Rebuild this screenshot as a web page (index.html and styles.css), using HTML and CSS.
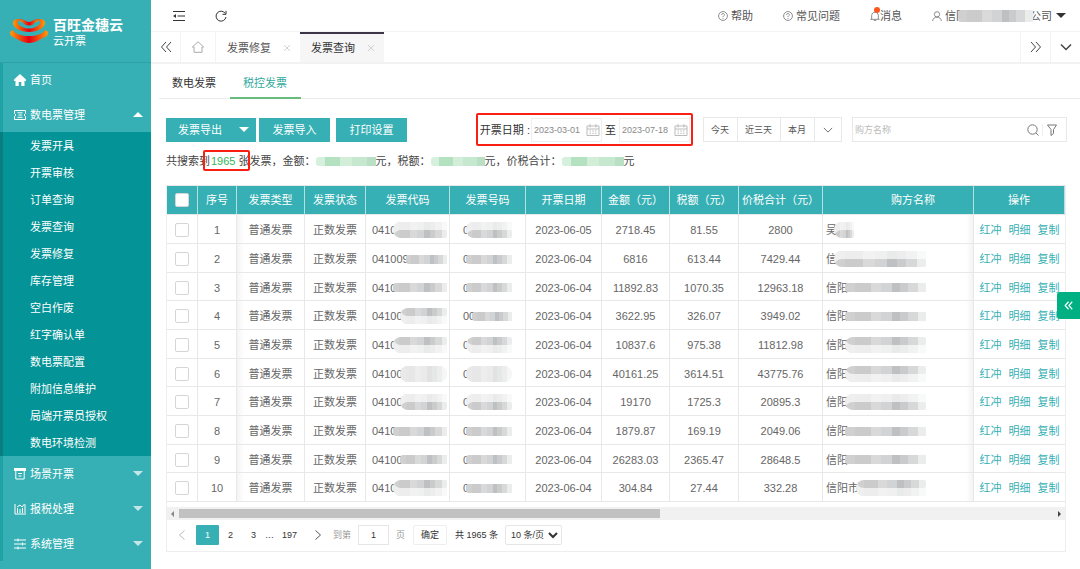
FILE: index.html
```html
<!DOCTYPE html>
<html lang="zh-CN">
<head>
<meta charset="utf-8">
<title>云开票 - 发票查询</title>
<link rel="stylesheet" href="styles.css">
</head>
<body>
<svg class="sprite" aria-hidden="true">
  <symbol id="i-dleft" viewBox="0 0 12 12"><path d="M6 1 1.500 6 6 11M11 1 6.500 6 11 11"/></symbol>
  <symbol id="i-dright" viewBox="0 0 12 12"><path d="M1 1 5.500 6 1 11M6 1 10.500 6 6 11"/></symbol>
  <symbol id="i-down" viewBox="0 0 12 12"><path d="M1 3.500 6 8.500 11 3.500"/></symbol>
  <symbol id="i-left" viewBox="0 0 12 12"><path d="M8.500 1.500 3.500 6 8.500 10.500"/></symbol>
  <symbol id="i-right" viewBox="0 0 12 12"><path d="M3.500 1.500 8.500 6 3.500 10.500"/></symbol>
  <symbol id="i-close" viewBox="0 0 12 12"><path d="M1.500 1.500 10.500 10.500M10.500 1.500 1.500 10.500"/></symbol>
  <symbol id="i-help" viewBox="0 0 12 12"><circle cx="6" cy="6" r="5.300"/><path d="M4.300 4.800C4.300 2.400 7.700 2.500 7.700 4.600 7.700 5.800 6 5.800 6 7.300M6 8.400V9.400"/></symbol>
  <symbol id="i-cal" viewBox="0 0 14 14"><path d="M1 3H13V12.500H1ZM1 6H13M4 1V4.500M10 1V4.500M3.500 8H5M6.300 8H7.800M9 8H10.500M3.500 10.300H5M6.300 10.300H7.800M9 10.300H10.500"/></symbol>
</svg>
<div class="app">
  <aside class="sidebar">
    <div class="brand">
      <svg class="brand-logo" viewBox="0 0 38 24" aria-hidden="true">
        <defs>
          <linearGradient id="bowl"><stop offset="0" stop-color="#ff9c0a"/><stop offset=".28" stop-color="#f0430e"/><stop offset=".5" stop-color="#e60012"/><stop offset=".72" stop-color="#f0430e"/><stop offset="1" stop-color="#ff9c0a"/></linearGradient>
        </defs>
        <path fill="url(#bowl)" d="M3 4C3-.500 9-.500 14 1 9 .800 7 2 8 4.500 10 8 15 9.500 19 9.500S28 8 30 4.500C31 2 29 .800 24 1 29-.500 35-.500 35 4 35 9 27 13 19 13S3 9 3 4Z"/>
        <path fill="url(#bowl)" d="M9 2.500C11 .500 14 .800 16 2 18 3.200 20 3.200 22 2 24 .800 27 .500 29 2.500 26 2.300 25 3.500 23.500 5 21 7 17 7 14.500 5 13 3.500 12 2.300 9 2.500Z"/>
        <path fill="url(#bowl)" d="M3 11C-1 12-1 16 3 18 8 20 12 24 19 24S30 20 35 18C39 16 39 12 35 11 33 15 26 17 19 17S5 15 3 11Z"/>
      </svg>
      <div class="brand-text"><strong>百旺金穗云</strong><span>云开票</span></div>
    </div>
    <nav class="menu">
      <a class="menu-item" href="#"><svg viewBox="0 0 12 12" aria-hidden="true"><path class="solid" d="M6 0 12 5.500V7H10.500V12H7.300V8H4.700V12H1.500V7H0V5.500Z"/></svg>首页</a>
      <a class="menu-item open" href="#"><svg viewBox="0 0 12 12" aria-hidden="true"><path d="M.500 1.500H11.500V4.500L10 6 11.500 7.500V10.500H.500V7.500L2 6 .500 4.500ZM3.500 3.800H8.500M4.500 6H8M3.500 8.300H8.500"/></svg>数电票管理<i class="caret up"></i></a>
      <div class="submenu">
        <a href="#">发票开具</a>
        <a href="#">开票审核</a>
        <a href="#">订单查询</a>
        <a href="#">发票查询</a>
        <a href="#">发票修复</a>
        <a href="#">库存管理</a>
        <a href="#">空白作废</a>
        <a href="#">红字确认单</a>
        <a href="#">数电票配置</a>
        <a href="#">附加信息维护</a>
        <a href="#">局端开票员授权</a>
        <a href="#">数电环境检测</a>
      </div>
      <a class="menu-item" href="#"><svg viewBox="0 0 12 12" aria-hidden="true"><path class="solid" d="M0 0H12V3H0Z"/><path d="M1.800 3V11H10.200V3M4 5.500H8M4.500 8H7.500"/></svg>场景开票<i class="caret"></i></a>
      <a class="menu-item" href="#"><svg viewBox="0 0 12 12" aria-hidden="true"><path d="M1 1V11H12M3.500 10V5M6 10V6M8.500 10V5M11 10V1.500M3 4 6 2 8 4 10.500 1"/></svg>报税处理<i class="caret"></i></a>
      <a class="menu-item" href="#"><svg viewBox="0 0 12 12" aria-hidden="true"><path d="M0 2H12M0 6H12M0 10H12M4 .500V3.500M8.500 4.500V7.500M4 8.500V11.500"/></svg>系统管理<i class="caret"></i></a>
    </nav>
  </aside>

  <main class="main">
    <header class="topbar">
      <button class="icon-btn" aria-label="收起菜单"><svg viewBox="0 0 12 12"><path d="M0 1.500H12M4.500 6H12M0 10.500H12"/><path class="solid" d="M0 6 3 4V8Z"/></svg></button>
      <button class="icon-btn" aria-label="刷新"><svg viewBox="0 0 12 12"><path d="M10.300 3.500A5 5 0 1 0 11 7M11 .800V4.300H7.500"/></svg></button>
      <div class="top-links">
        <a href="#"><svg viewBox="0 0 12 12"><use href="#i-help"/></svg>帮助</a>
        <a href="#"><svg viewBox="0 0 12 12"><use href="#i-help"/></svg>常见问题</a>
        <a class="notice" href="#"><svg viewBox="0 0 12 12"><path d="M.500 10H11.500M2 10V5.500C2 0 10 0 10 5.500V10M4.500 11.500H7.500"/></svg>消息</a>
        <a class="account" href="#"><svg viewBox="0 0 12 12"><circle cx="6" cy="4" r="3.200"/><path d="M.800 12C1 5.800 11 5.800 11.200 12"/></svg>信阳<span class="mosaic gray m-account"></span>公司<i class="caret"></i></a>
      </div>
    </header>

    <div class="tabs">
      <button class="tab-tool" aria-label="向左"><svg viewBox="0 0 12 12"><use href="#i-dleft"/></svg></button>
      <button class="tab-tool home" aria-label="主页"><svg viewBox="0 0 12 12"><path d="M6 .700 11.600 6H10V11.300H2V6H.400Z"/></svg></button>
      <div class="tab"><a href="#">发票修复</a><button aria-label="关闭"><svg viewBox="0 0 12 12"><use href="#i-close"/></svg></button></div>
      <div class="tab active"><a href="#">发票查询</a><button aria-label="关闭"><svg viewBox="0 0 12 12"><use href="#i-close"/></svg></button></div>
      <div class="spacer"></div>
      <button class="tab-tool end" aria-label="向右"><svg viewBox="0 0 12 12"><use href="#i-dright"/></svg></button>
      <button class="tab-tool end more" aria-label="更多"><svg viewBox="0 0 12 12"><use href="#i-down"/></svg></button>
    </div>

    <nav class="subtabs">
      <a href="#">数电发票</a>
      <a class="active" href="#">税控发票</a>
    </nav>

    <section class="content">
      <div class="toolbar">
        <button class="primary split">发票导出<i class="caret"></i></button>
        <button class="primary">发票导入</button>
        <button class="primary print">打印设置</button>
        <div class="spacer"></div>
        <div class="date-range">
          <label for="from">开票日期 :</label>
          <span class="date"><input id="from" type="text" value="2023-03-01"><svg viewBox="0 0 14 14"><use href="#i-cal"/></svg></span>
          <label for="to">至</label>
          <span class="date"><input id="to" type="text" value="2023-07-18"><svg viewBox="0 0 14 14"><use href="#i-cal"/></svg></span>
        </div>
        <div class="quick">
          <button>今天</button><button>近三天</button><button>本月</button><button aria-label="更多"><svg viewBox="0 0 12 12"><use href="#i-down"/></svg></button>
        </div>
        <div class="search">
          <input type="text" placeholder="购方名称" aria-label="购方名称">
          <button aria-label="搜索"><svg viewBox="0 0 12 12"><circle cx="5.500" cy="5.500" r="4.700"/><path d="M9 9 11.500 11.500"/></svg></button>
          <button class="filter" aria-label="筛选"><svg viewBox="0 0 12 12"><path d="M1.500 1H10.500L7.500 5.500V9.500L5 11.500V5.500Z"/></svg></button>
        </div>
      </div>

      <p class="summary">共搜索到<span class="count"><b>1965</b> 张</span>发票，金额：<span class="mosaic green m-amount"></span>元，税额：<span class="mosaic green m-tax"></span>元，价税合计：<span class="mosaic green m-total"></span>元</p>

      <div class="card">
        <table>
          <colgroup><col class="c-check"><col class="c-no"><col class="c-type"><col class="c-state"><col class="c-total"><col class="c-num"><col class="c-num"><col class="c-type"><col class="c-tax"><col class="c-total"><col><col class="c-op"></colgroup>
          <thead>
            <tr><th><input type="checkbox" aria-label="全选"></th><th>序号</th><th>发票类型</th><th>发票状态</th><th>发票代码</th><th>发票号码</th><th>开票日期</th><th>金额（元）</th><th>税额（元）</th><th>价税合计（元）</th><th class="th-buyer">购方名称</th><th>操作</th></tr>
          </thead>
          <tbody>
            <tr><td><input type="checkbox" aria-label="选择 1"></td><td>1</td><td>普通发票</td><td>正数发票</td><td><div class="masked code">0410<span class="mosaic gray low"></span></div></td><td><div class="masked num">0<span class="mosaic gray low"></span></div></td><td>2023-06-05</td><td>2718.45</td><td>81.55</td><td>2800</td><td><div class="masked buyer short">吴<span class="mosaic gray low"></span></div></td><td><div class="ops"><a href="#">红冲</a><a href="#">明细</a><a href="#">复制</a></div></td></tr>
            <tr><td><input type="checkbox" aria-label="选择 2"></td><td>2</td><td>普通发票</td><td>正数发票</td><td><div class="masked code">041009<span class="mosaic gray"></span></div></td><td><div class="masked num">0<span class="mosaic gray"></span></div></td><td>2023-06-04</td><td>6816</td><td>613.44</td><td>7429.44</td><td><div class="masked buyer">信<span class="mosaic gray low"></span></div></td><td><div class="ops"><a href="#">红冲</a><a href="#">明细</a><a href="#">复制</a></div></td></tr>
            <tr><td><input type="checkbox" aria-label="选择 3"></td><td>3</td><td>普通发票</td><td>正数发票</td><td><div class="masked code">0410<span class="mosaic gray"></span></div></td><td><div class="masked num">0<span class="mosaic gray"></span></div></td><td>2023-06-04</td><td>11892.83</td><td>1070.35</td><td>12963.18</td><td><div class="masked buyer">信阳<span class="mosaic gray"></span></div></td><td><div class="ops"><a href="#">红冲</a><a href="#">明细</a><a href="#">复制</a></div></td></tr>
            <tr><td><input type="checkbox" aria-label="选择 4"></td><td>4</td><td>普通发票</td><td>正数发票</td><td><div class="masked code">04100<span class="mosaic gray high"></span></div></td><td><div class="masked num">00<span class="mosaic gray"></span></div></td><td>2023-06-04</td><td>3622.95</td><td>326.07</td><td>3949.02</td><td><div class="masked buyer">信阳<span class="mosaic gray"></span></div></td><td><div class="ops"><a href="#">红冲</a><a href="#">明细</a><a href="#">复制</a></div></td></tr>
            <tr><td><input type="checkbox" aria-label="选择 5"></td><td>5</td><td>普通发票</td><td>正数发票</td><td><div class="masked code">0410<span class="mosaic gray high"></span></div></td><td><div class="masked num">0<span class="mosaic gray high"></span></div></td><td>2023-06-04</td><td>10837.6</td><td>975.38</td><td>11812.98</td><td><div class="masked buyer">信阳<span class="mosaic gray high"></span></div></td><td><div class="ops"><a href="#">红冲</a><a href="#">明细</a><a href="#">复制</a></div></td></tr>
            <tr><td><input type="checkbox" aria-label="选择 6"></td><td>6</td><td>普通发票</td><td>正数发票</td><td><div class="masked code">04100<span class="mosaic gray pale"></span></div></td><td><div class="masked num">0<span class="mosaic gray pale"></span></div></td><td>2023-06-04</td><td>40161.25</td><td>3614.51</td><td>43775.76</td><td><div class="masked buyer">信阳<span class="mosaic gray high"></span></div></td><td><div class="ops"><a href="#">红冲</a><a href="#">明细</a><a href="#">复制</a></div></td></tr>
            <tr><td><input type="checkbox" aria-label="选择 7"></td><td>7</td><td>普通发票</td><td>正数发票</td><td><div class="masked code">04100<span class="mosaic gray low"></span></div></td><td><div class="masked num">0<span class="mosaic gray low"></span></div></td><td>2023-06-04</td><td>19170</td><td>1725.3</td><td>20895.3</td><td><div class="masked buyer">信阳<span class="mosaic gray low"></span></div></td><td><div class="ops"><a href="#">红冲</a><a href="#">明细</a><a href="#">复制</a></div></td></tr>
            <tr><td><input type="checkbox" aria-label="选择 8"></td><td>8</td><td>普通发票</td><td>正数发票</td><td><div class="masked code">0410<span class="mosaic gray"></span></div></td><td><div class="masked num">0<span class="mosaic gray"></span></div></td><td>2023-06-04</td><td>1879.87</td><td>169.19</td><td>2049.06</td><td><div class="masked buyer">信阳<span class="mosaic gray"></span></div></td><td><div class="ops"><a href="#">红冲</a><a href="#">明细</a><a href="#">复制</a></div></td></tr>
            <tr><td><input type="checkbox" aria-label="选择 9"></td><td>9</td><td>普通发票</td><td>正数发票</td><td><div class="masked code">04100<span class="mosaic gray"></span></div></td><td><div class="masked num">0<span class="mosaic gray"></span></div></td><td>2023-06-04</td><td>26283.03</td><td>2365.47</td><td>28648.5</td><td><div class="masked buyer">信阳<span class="mosaic gray"></span></div></td><td><div class="ops"><a href="#">红冲</a><a href="#">明细</a><a href="#">复制</a></div></td></tr>
            <tr><td><input type="checkbox" aria-label="选择 10"></td><td>10</td><td>普通发票</td><td>正数发票</td><td><div class="masked code">0410<span class="mosaic gray high"></span></div></td><td><div class="masked num">0<span class="mosaic gray"></span></div></td><td>2023-06-04</td><td>304.84</td><td>27.44</td><td>332.28</td><td><div class="masked buyer">信阳市<span class="mosaic gray high"></span></div></td><td><div class="ops"><a href="#">红冲</a><a href="#">明细</a><a href="#">复制</a></div></td></tr>
          </tbody>
        </table>
        <div class="scrollbar"><i class="arrow prev"></i><div class="track"><div class="thumb"></div></div><i class="arrow next"></i></div>
        <div class="pager">
          <button class="step off" aria-label="上一页"><svg viewBox="0 0 12 12"><use href="#i-left"/></svg></button>
          <a class="page current" href="#">1</a>
          <a class="page" href="#">2</a>
          <a class="page" href="#">3</a>
          <span class="dots">…</span>
          <a class="page last" href="#">197</a>
          <button class="step" aria-label="下一页"><svg viewBox="0 0 12 12"><use href="#i-right"/></svg></button>
          <label class="jump">到第<input type="text" value="1">页</label>
          <button class="confirm">确定</button>
          <span class="total">共 1965 条</span>
          <select aria-label="每页条数"><option>10 条/页</option></select>
        </div>
      </div>
    </section>
  </main>
  <button class="drawer" aria-label="展开"><svg viewBox="0 0 12 12"><use href="#i-dleft"/></svg></button>
</div>
</body>
</html>
```

FILE: styles.css
```css
* { box-sizing: border-box; }

body {
  margin: 0;
  font: 11px/16px "Liberation Sans", "Noto Sans CJK SC", sans-serif;
  color: #333;
  background: #fff;
}

a { color: inherit; text-decoration: none; }
button, input, select { font: inherit; color: inherit; margin: 0; }
button { padding: 0; border: 0; background: none; cursor: pointer; }
svg { width: 12px; height: 12px; fill: none; stroke: currentColor; flex: none; display: block; }
.solid { fill: currentColor; stroke: none; }
.sprite { display: none; }
.spacer { flex: 1; }

.app { display: flex; min-height: 100vh; }

.caret {
  width: 0;
  height: 0;
  border: 5px solid transparent;
  border-top-color: currentColor;
  border-bottom-width: 0;
}
.caret.up { border-top-width: 0; border-bottom: 5px solid currentColor; }

/* Sidebar */
.sidebar { flex: none; width: 151px; background: #36b0b4; color: #fff; }
.brand {
  display: flex;
  align-items: center;
  gap: 5px;
  height: 63px;
  padding-left: 10px;
  border-bottom: 1px solid #2ea0a4;
}
.brand-logo { width: 38px; height: 24px; stroke: none; }
.brand-text { display: flex; flex-direction: column; gap: 1px; padding-top: 3px; }
.brand-text strong { font-size: 14px; line-height: 16px; }
.brand-text span { line-height: 15px; }
.menu { border-left: 3px solid #1fa2a5; }
.menu-item { display: flex; align-items: center; gap: 4px; height: 35px; padding: 0 8px 0 11px; }
.menu-item:first-child { height: 34px; }
.menu-item .caret { margin-left: auto; color: #c3e7e8; }
.menu-item .caret.up { color: #fff; }
.submenu { margin-left: -3px; padding-left: 27px; border-left: 3px solid #087e81; background: #049396; }
.submenu a { display: block; padding-top: 2px; line-height: 25px; }

/* Top bar */
.main { flex: 1; min-width: 0; }
.topbar { display: flex; align-items: center; height: 32px; padding: 0 14px 0 22px; gap: 30px; border-bottom: 1px solid #f3f3f3; }
.top-links { display: flex; align-items: center; gap: 30px; margin-left: auto; color: #555; }
.top-links a { display: flex; align-items: center; gap: 3px; }
.top-links svg { width: 10px; height: 10px; color: #777; }
.notice { position: relative; }
.notice::after { content: ""; position: absolute; left: 4px; top: -1px; width: 6px; height: 6px; border-radius: 50%; background: #ff5722; }
.top-links .notice { gap: 0; }
.top-links .account { gap: 0; }
.account svg { margin-right: 3px; }
.account .caret { margin-left: 4px; color: #333; }

/* Page tabs */
.tabs { display: flex; height: 32px; border-bottom: 2px solid #f2f2f2; }
.tab-tool { display: flex; align-items: center; justify-content: center; width: 30px; border-right: 1px solid #f3f3f3; color: #444; }
.tab-tool.home { width: 35px; color: #aaa; }
.tab-tool.end { border-right: 0; border-left: 1px solid #f3f3f3; }
.tab-tool.more svg { stroke-width: 1.5; }
.tab { display: flex; align-items: center; gap: 12px; padding: 0 9px 0 11px; border-top: 2px solid transparent; color: #555; }
.tab svg { width: 8px; height: 8px; color: #bbb; }
.tab.active { background: #f6f6f6; border-top-color: #3b3547; color: #333; }

.subtabs { display: flex; height: 35px; margin-left: 8px; border-bottom: 1px solid #ececec; }
.subtabs a { padding: 0 14px 0 13px; line-height: 38px; }
.subtabs .active { height: 35px; color: #2fa99b; border-bottom: 2px solid #66bb7d; }

/* Toolbar */
.content { padding: 14px 15px 17px; }
.toolbar { display: flex; align-items: center; height: 33px; margin-right: -2px; }
.primary { height: 24px; width: 71px; margin-right: 6px; background: #36b0b4; color: #fff; }
.primary.split { display: flex; align-items: center; justify-content: space-between; width: 90px; padding: 0 7px 0 12px; margin-right: 3px; }
.date-range { display: flex; align-items: center; height: 33px; padding: 0 1px 0 2px; border: 2px solid #f91f12; border-radius: 2px; gap: 1px; }
.date { display: flex; align-items: center; height: 24px; width: 71px; border: 1px solid #eee; }
.date input { width: 54px; padding: 0 0 0 2px; border: 0; font-size: 9px; color: #888; background: none; }
.date svg { width: 14px; height: 14px; color: #bbb; }
.date-range label:nth-of-type(2) { padding: 0 2px; }
.quick { display: flex; height: 25px; margin: 0 10px; border: 1px solid #e8e8e8; font-size: 9px; color: #555; }
.quick button { padding: 0 8px 0 7px; border-right: 1px solid #e8e8e8; }
.quick button:last-child { padding: 0 8px; border-right: 0; }
.quick svg { width: 10px; height: 10px; }
.search { display: flex; align-items: center; width: 215px; height: 25px; padding-right: 8px; border: 1px solid #e8e8e8; color: #777; }
.search input { flex: 1; min-width: 0; padding: 0 2px; border: 0; font-size: 9px; background: none; }
.search input::placeholder { color: #bbb; }
.search .filter { margin-left: 3px; padding-left: 3px; border-left: 1px solid #eee; }

.summary { display: flex; align-items: center; margin: 7px 0 16px; white-space: pre; color: #444; }
.count { position: relative; padding-left: 1px; }
.count::before { content: ""; position: absolute; inset: -3px 0 -2px -7px; border: 2px solid #f91f12; border-radius: 2px; }
.count b { font-weight: normal; color: #35b558; }

/* Pixelated masks over private values */
.mosaic { display: block; height: 9px; border-radius: 3px 0 0 3px; }
.mosaic.gray { background: linear-gradient(90deg, #d0d0d0 12%, #cbcbcb 12% 32%, #d9d9da 32% 45%, #d2d3d4 45% 58%, #bfc0c2 58% 68%, #cacbcc 68% 78%, #d8d8d8 78% 90%, #ebecec 90%); }
.mosaic.green { background: linear-gradient(90deg, #d5f0dc 15%, #b4e2c1 15% 40%, #d2eed9 40% 60%, #c5e8ce 60% 85%, #b9dfc4 85%); }
.mosaic.low, .mosaic.high, .mosaic.pale { height: 16px; border-radius: 8px 2px 2px 8px; box-shadow: inset 0 8px #ffffffa8; }
.mosaic.high { box-shadow: inset 0 -8px #ffffffa8; }
.mosaic.pale { border-radius: 8px; box-shadow: inset 0 16px #ffffff88; }
.m-amount { width: 60px; }
.m-tax { width: 54px; }
.m-total { width: 62px; }
.m-account { position: relative; width: 75px; height: 12px; margin: 0 -3px 0 -9px; }
.masked { display: flex; align-items: center; }
.masked .mosaic { flex: 1; margin-left: -3px; }
.masked.code { padding: 0 2px 0 6px; }
.masked.num { padding: 0 13px; }
.masked.buyer { width: 103px; padding-left: 3px; }
.masked.short { width: 31px; }

/* Invoice table */
.card { border: 1px solid #eee; border-top: 0; margin-right: -1px; padding-bottom: 1px; }
table { width: 100%; table-layout: fixed; border-spacing: 0; color: #666; }
.c-check { width: 31px; }
.c-no { width: 39px; }
.c-type { width: 68px; }
.c-state { width: 61px; }
.c-total { width: 84px; }
.c-num { width: 76px; }
.c-tax { width: 69px; }
.c-op { width: 91px; }
th, td { padding: 2px 0 0; height: 29px; text-align: center; white-space: nowrap; border-right: 1px solid #e8e8e8; border-bottom: 1px solid #e8e8e8; }
tr:nth-child(3n) td { height: 28px; }
th { height: 30px; padding: 0; font-weight: normal; color: #fff; background: #36b0b4; border-top: 1px solid #e8e8e8; border-right-color: #b5dfe1; }
.th-buyer { padding-left: 30px; }
td:nth-child(3) { background: linear-gradient(90deg, #f4f4f4, #fff 7px); }
td:nth-child(11) { background: linear-gradient(270deg, #f4f4f4, #fff 7px); }
td:last-child { border-right: 0; }
table input { appearance: none; display: block; width: 14px; height: 14px; margin: 0 auto; border: 1px solid #d5d5d5; border-radius: 2px; background: #fff; }
.ops { display: flex; justify-content: center; gap: 7px; color: #36b0b4; }

.scrollbar { display: flex; align-items: center; height: 13px; margin-top: 5px; padding: 0 4px; background: #f1f1f1; }
.arrow { border: 3px solid transparent; border-right-color: #888; border-left: 0; }
.arrow.next { border-right: 0; border-left: 3px solid #444; }
.track { flex: 1; margin: 0 5px; }
.thumb { width: 55%; height: 9px; background: #c1c1c1; }

/* Pagination */
.pager { display: flex; align-items: center; height: 30px; padding-left: 8px; font-size: 9px; }
.step { width: 24px; display: flex; justify-content: center; color: #555; }
.step.off { color: #bbb; width: 14px; margin-right: 7px; }
.page { min-width: 23px; line-height: 20px; text-align: center; }
.page.current { background: #36b0b4; color: #fff; border-radius: 1px; }
.page.last { padding: 0 9px 0 8px; }
.jump { display: flex; align-items: center; gap: 7px; margin: 0 8px 0 3px; color: #999; }
.jump input { width: 31px; height: 20px; padding: 0; text-align: center; border: 1px solid #e6e6e6; color: #333; }
.confirm { width: 34px; height: 20px; border: 1px solid #eee; border-radius: 2px; }
.total { margin: 0 7px 0 8px; }
.pager select { width: 57px; height: 20px; padding: 0 1px; border: 1px solid #e6e6e6; background: #fff; border-radius: 2px; }

.drawer {
  position: fixed;
  right: 0;
  top: 292px;
  display: flex;
  align-items: center;
  justify-content: center;
  width: 23px;
  height: 27px;
  border-radius: 3px 0 0 3px;
  background: #00b083;
  color: #fff;
}
.drawer svg { width: 9px; height: 9px; stroke-width: 1.5; }
```
